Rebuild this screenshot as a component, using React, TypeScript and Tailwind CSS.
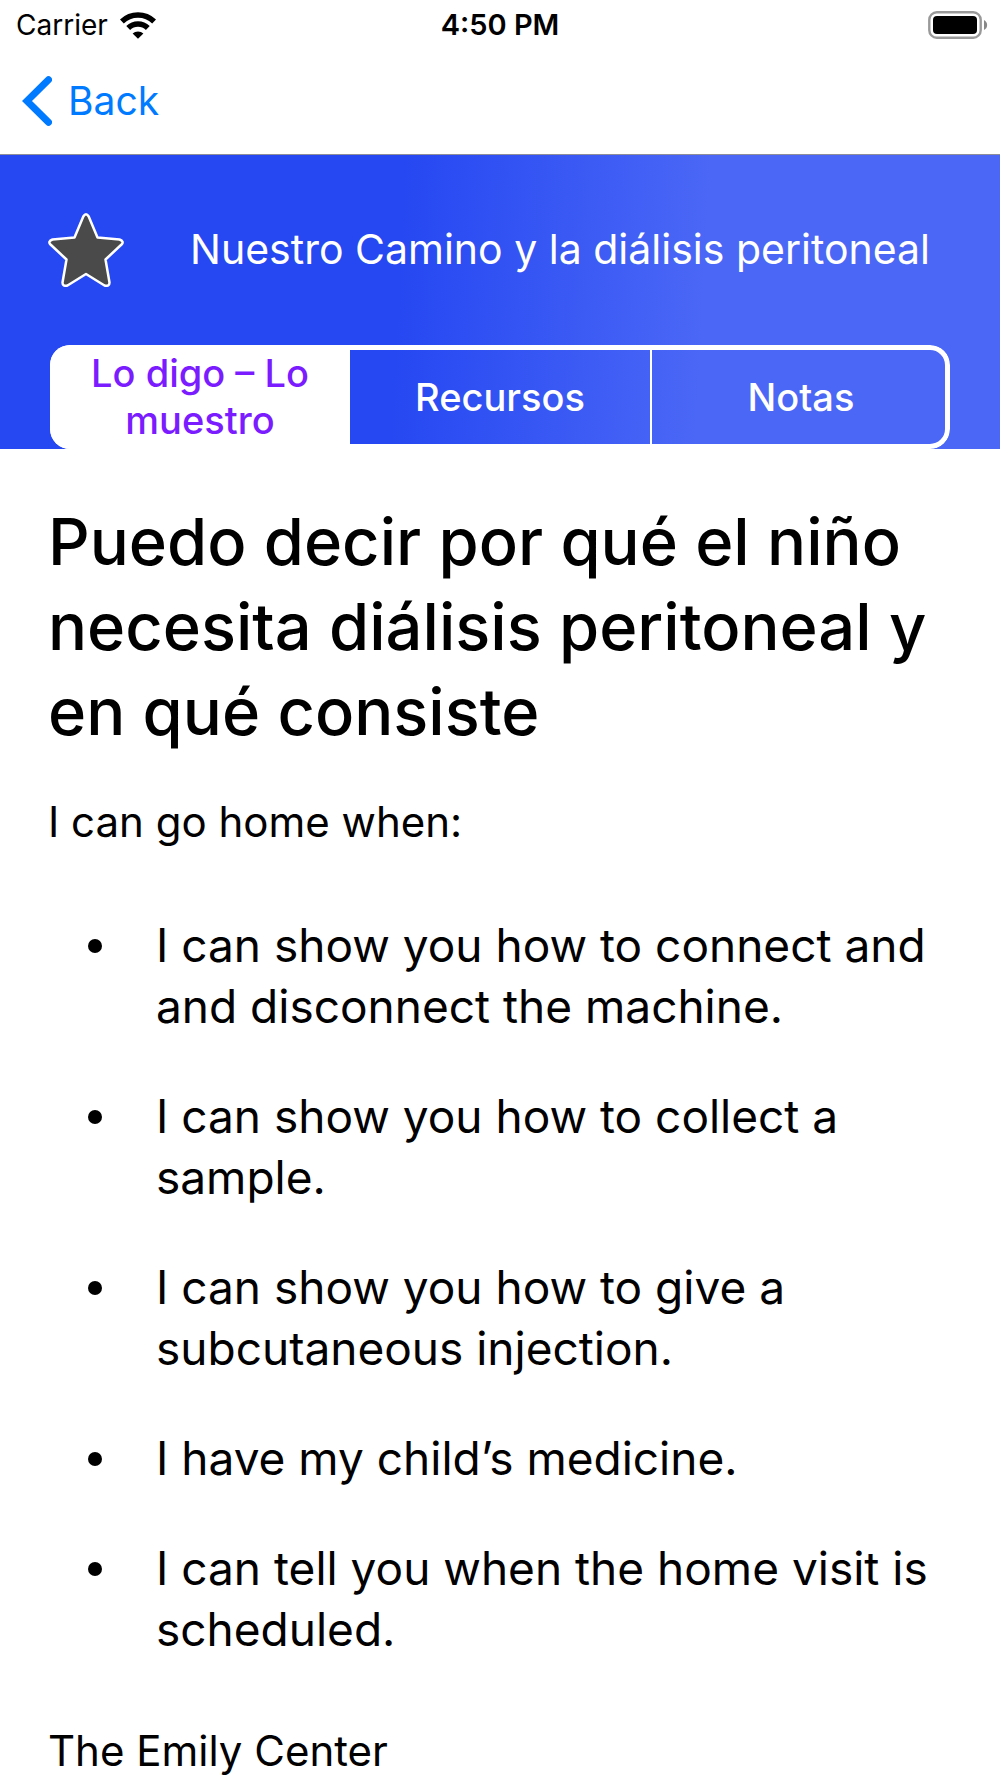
import React, { useState } from "react";
import clsx from "clsx";

const tabs = [
  { id: "teach", label: "Lo digo – Lo muestro" },
  { id: "resources", label: "Recursos" },
  { id: "notes", label: "Notas" },
];

const goals = [
  "I can show you how to connect and and disconnect the machine.",
  "I can show you how to collect a sample.",
  "I can show you how to give a subcutaneous injection.",
  "I have my child’s medicine.",
  "I can tell you when the home visit is scheduled.",
];

const WifiIcon = () => (
  <svg viewBox="0 0 36 27" className="h-[27px] w-9" aria-hidden="true">
    <g fill="none" stroke="#000" strokeWidth="5.5">
      <path d="M1.9 9.4a23.2 23.2 0 0 1 32.2 0" />
      <path d="M8.2 16a14 14 0 0 1 19.6 0" />
    </g>
    <path d="M18 26.8l-5.4-5.2a7.8 7.8 0 0 1 10.8 0z" />
  </svg>
);

const BatteryIcon = () => (
  <svg viewBox="0 0 60 28" className="h-7 w-[60px]" aria-hidden="true">
    <rect
      x="1.3"
      y="1.3"
      width="51.4"
      height="25.4"
      rx="7.5"
      fill="none"
      stroke="#999"
      strokeWidth="2.4"
    />
    <rect x="5" y="5" width="44" height="18" rx="4" />
    <path d="M56 9c4.2 2 4.2 8 0 10z" fill="#888" />
  </svg>
);

const StarIcon = () => (
  <svg viewBox="0 0 76 74" className="h-[74px] w-[76px]" aria-hidden="true">
    <path
      d="M35.3 3.5Q38 -.8 40.7 3.5L49.5 24.5L71.5 26.5Q76.5 28.5 73.5 31.5L57.5 46.5L61.5 69.5Q61.5 73.8 56.5 72.5L38 61L19.5 72.5Q14.5 73.8 14.5 69.5L18.5 46.5L2.5 31.5Q-.5 28.5 4.5 26.5L26.5 24.5Z"
      fill="#4a4a4a"
      stroke="#fff"
      strokeWidth="2.5"
      strokeLinejoin="round"
    />
  </svg>
);

const App = () => {
  const [activeTab, setActiveTab] = useState("teach");
  const [favorite, setFavorite] = useState(false);

  return (
    <div className="bg-white font-['Inter','Liberation_Sans',sans-serif] text-black">
      {/* Status bar */}
      <div className="grid h-[50px] grid-cols-3 items-center px-3 text-[28px]">
        <div className="flex items-center gap-3 pl-1">
          <span>Carrier</span>
          <WifiIcon />
        </div>
        <div className="text-center text-[29px] font-semibold">4:50 PM</div>
        <div className="flex justify-end">
          <BatteryIcon />
        </div>
      </div>

      {/* Navigation */}
      <nav className="flex h-[105px] items-center border-b border-[#8e8e9b] px-[22px] pb-0.5">
        <a
          href="#back"
          className="flex items-center gap-4 text-[39px] leading-[50px] text-[#007aff]"
        >
          <svg viewBox="0 0 30 50" className="h-[50px] w-[30px]" aria-hidden="true">
            <path
              d="M26.5 3.8L5 25L26.5 46.2"
              fill="none"
              stroke="currentColor"
              strokeWidth="7"
              strokeLinecap="round"
            />
          </svg>
          Back
        </a>
      </nav>

      <header className="bg-[linear-gradient(93deg,#2648f2_40%,#4a67f6_70%)] px-[50px]">
        <div className="flex h-[190px] items-center justify-between pr-5">
          <button
            type="button"
            aria-label="Favorite"
            aria-pressed={favorite}
            onClick={() => setFavorite(!favorite)}
            className="-ml-0.5"
          >
            <StarIcon />
          </button>
          <h1 className="text-[41px] text-white">
            Nuestro Camino y la diálisis peritoneal
          </h1>
        </div>

        {/* The outline sits over the tabs so the active one fills its corner */}
        <div
          role="tablist"
          className="relative grid h-[104px] grid-cols-3 overflow-hidden rounded-[20px] after:pointer-events-none after:absolute after:inset-0 after:rounded-[20px] after:border-[5px] after:border-white"
        >
          {tabs.map((tab, index) => (
            <button
              key={tab.id}
              type="button"
              role="tab"
              aria-selected={activeTab === tab.id}
              onClick={() => setActiveTab(tab.id)}
              className={clsx(
                "px-4 text-[38px] leading-[47px] font-medium",
                index === 2 && "border-l-2 border-white",
                activeTab === tab.id ? "bg-white text-[#7a1cff]" : "text-white"
              )}
            >
              {tab.label}
            </button>
          ))}
        </div>
      </header>

      <main className="px-12 pt-[50px]">
        <h2 className="text-[65px] leading-[85px] font-medium">
          Puedo decir por qué el niño necesita diálisis peritoneal y en qué
          consiste
        </h2>
        <p className="mt-[37px] text-[42px] leading-[61px]">I can go home when:</p>
        <ul className="mt-[63px] flex flex-col gap-[49px] pl-10">
          {goals.map((goal) => (
            <li key={goal} className="flex gap-[54px] text-[46px] leading-[61px]">
              <span className="mt-6 size-[14px] shrink-0 rounded-full bg-black" />
              <span>{goal}</span>
            </li>
          ))}
        </ul>
        <p className="mt-[60px] text-[42px] leading-[61px]">The Emily Center</p>
      </main>
    </div>
  );
};

export default App;
